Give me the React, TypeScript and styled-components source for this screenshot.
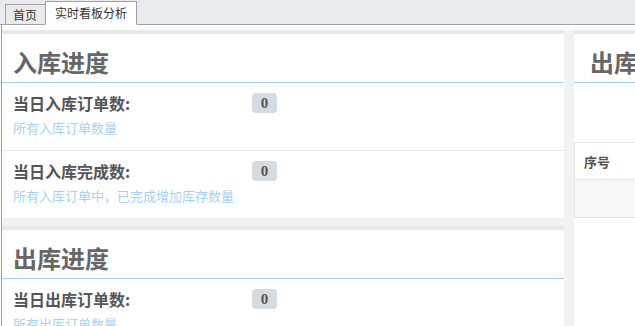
import styled, { createGlobalStyle } from 'styled-components';

const GlobalStyle = createGlobalStyle`
  html, body {
    margin: 0;
    padding: 0;
    overflow: hidden;
    background: #fff;
    font-family: "Noto Sans CJK SC", "Liberation Sans", sans-serif;
  }
`;

interface StatType {
  label: string;
  value: number;
  desc: string;
}

const inbound: StatType[] = [
  { label: '当日入库订单数:', value: 0, desc: '所有入库订单数量' },
  { label: '当日入库完成数:', value: 0, desc: '所有入库订单中，已完成增加库存数量' },
];

const outbound: StatType[] = [
  { label: '当日出库订单数:', value: 0, desc: '所有出库订单数量' },
  { label: '当日出库完成数:', value: 0, desc: '所有出库订单中，已完成扣减库存数量' },
];

const StatPanel = ({ title, items }: { title: string; items: StatType[] }) => (
  <_Panel>
    <_Title>{title}</_Title>
    {items.map(({ label, value, desc }, idx) => (
      <_StatRow key={idx}>
        <_StatLine>
          <_Label>{label}</_Label>
          <_Badge>{value}</_Badge>
        </_StatLine>
        <_Desc>{desc}</_Desc>
      </_StatRow>
    ))}
  </_Panel>
);

export default function App() {
  return (
    <>
      <GlobalStyle />
      <_TabBar>
        <_Tab>首页</_Tab>
        <_Tab active>实时看板分析</_Tab>
      </_TabBar>
      <_Content>
        <_Columns>
          <_LeftColumn>
            <StatPanel title="入库进度" items={inbound} />
            <StatPanel title="出库进度" items={outbound} />
          </_LeftColumn>
          <_RightPanel>
            <_Title indent={16}>出库明细</_Title>
            <_Toolbar />
            <_Table>
              <thead>
                <tr>
                  <_Th>序号</_Th>
                  <_Th>订单号</_Th>
                  <_Th>状态</_Th>
                </tr>
              </thead>
              <tbody>
                <_Tr>
                  <_Td />
                  <_Td />
                  <_Td />
                </_Tr>
              </tbody>
            </_Table>
          </_RightPanel>
        </_Columns>
      </_Content>
    </>
  );
}

const _TabBar = styled.div`
  display: flex;
  align-items: flex-end;
  height: 24px;
  padding-left: 5px;
  background-color: #e9eaee;
  border-bottom: 1px solid #a0a0a8;
`;

const _Tab = styled.div<{ active?: boolean }>`
  box-sizing: border-box;
  height: ${({ active }) => (active ? '24px' : '21px')};
  margin-bottom: -1px;
  margin-left: ${({ active }) => (active ? '-1px' : '0')};
  padding: ${({ active }) => (active ? '0 9px' : '0 8px 0 7px')};
  border: 1px solid #a0a0a8;
  border-bottom-color: ${({ active }) => (active ? '#fff' : '#a0a0a8')};
  background-color: ${({ active }) => (active ? '#fff' : '#e9eaee')};
  color: #333;
  font-size: 12px;
  line-height: ${({ active }) => (active ? '22px' : '19px')};
  white-space: nowrap;
`;

const _Content = styled.div`
  margin-left: 1px;
  padding-top: 5px;
  border-left: 1px solid #9a9aa4;
  height: calc(100vh - 25px);
  overflow: hidden;
`;

const _Columns = styled.div`
  display: flex;
  gap: 10px;
  height: 100%;
  background-color: #f2f2f2;
`;

const _LeftColumn = styled.div`
  display: flex;
  flex-direction: column;
  gap: 8px;
  width: 562px;
  flex-shrink: 0;
`;

const _Panel = styled.section`
  background-color: #fff;
  border-top: 4px solid #e6e8eb;
`;

const _RightPanel = styled(_Panel)`
  width: 420px;
  flex-shrink: 0;
`;

const _Title = styled.h2<{ indent?: number }>`
  margin: 0;
  padding: 14px ${({ indent }) => indent ?? 11}px 6px;
  font-size: 24px;
  line-height: 28px;
  font-weight: bold;
  color: #666;
  white-space: nowrap;
  border-bottom: 1px solid #9fcff0;
`;

const _StatRow = styled.div`
  padding: 10px 11px 13px;
  & + & {
    border-top: 1px solid #e8e8e8;
  }
`;

const _StatLine = styled.div`
  display: flex;
  align-items: center;
`;

const _Label = styled.span`
  width: 239px;
  font-size: 16px;
  line-height: 20px;
  font-weight: bold;
  color: #555;
`;

const _Badge = styled.span`
  width: 25px;
  height: 20px;
  border-radius: 4px;
  background-color: #d4dce2;
  color: #555;
  font-family: "Liberation Serif", serif;
  font-size: 15px;
  font-weight: bold;
  line-height: 20px;
  text-align: center;
`;

const _Desc = styled.div`
  margin-top: 6px;
  font-size: 13px;
  line-height: 18px;
  color: #a6d2f1;
`;

const _Toolbar = styled.div`
  height: 59px;
`;

const _Table = styled.table`
  width: 100%;
  border-collapse: collapse;
  border: 1px solid #e6e6e6;
`;

const _Th = styled.th`
  height: 36px;
  padding: 0 9px;
  border-bottom: 1px solid #e6e6e6;
  text-align: left;
  font-size: 13px;
  font-weight: 600;
  color: #555;
`;

const _Tr = styled.tr`
  background-color: #f8f8f8;
`;

const _Td = styled.td`
  height: 35px;
  border-bottom: 1px solid #e6e6e6;
`;
